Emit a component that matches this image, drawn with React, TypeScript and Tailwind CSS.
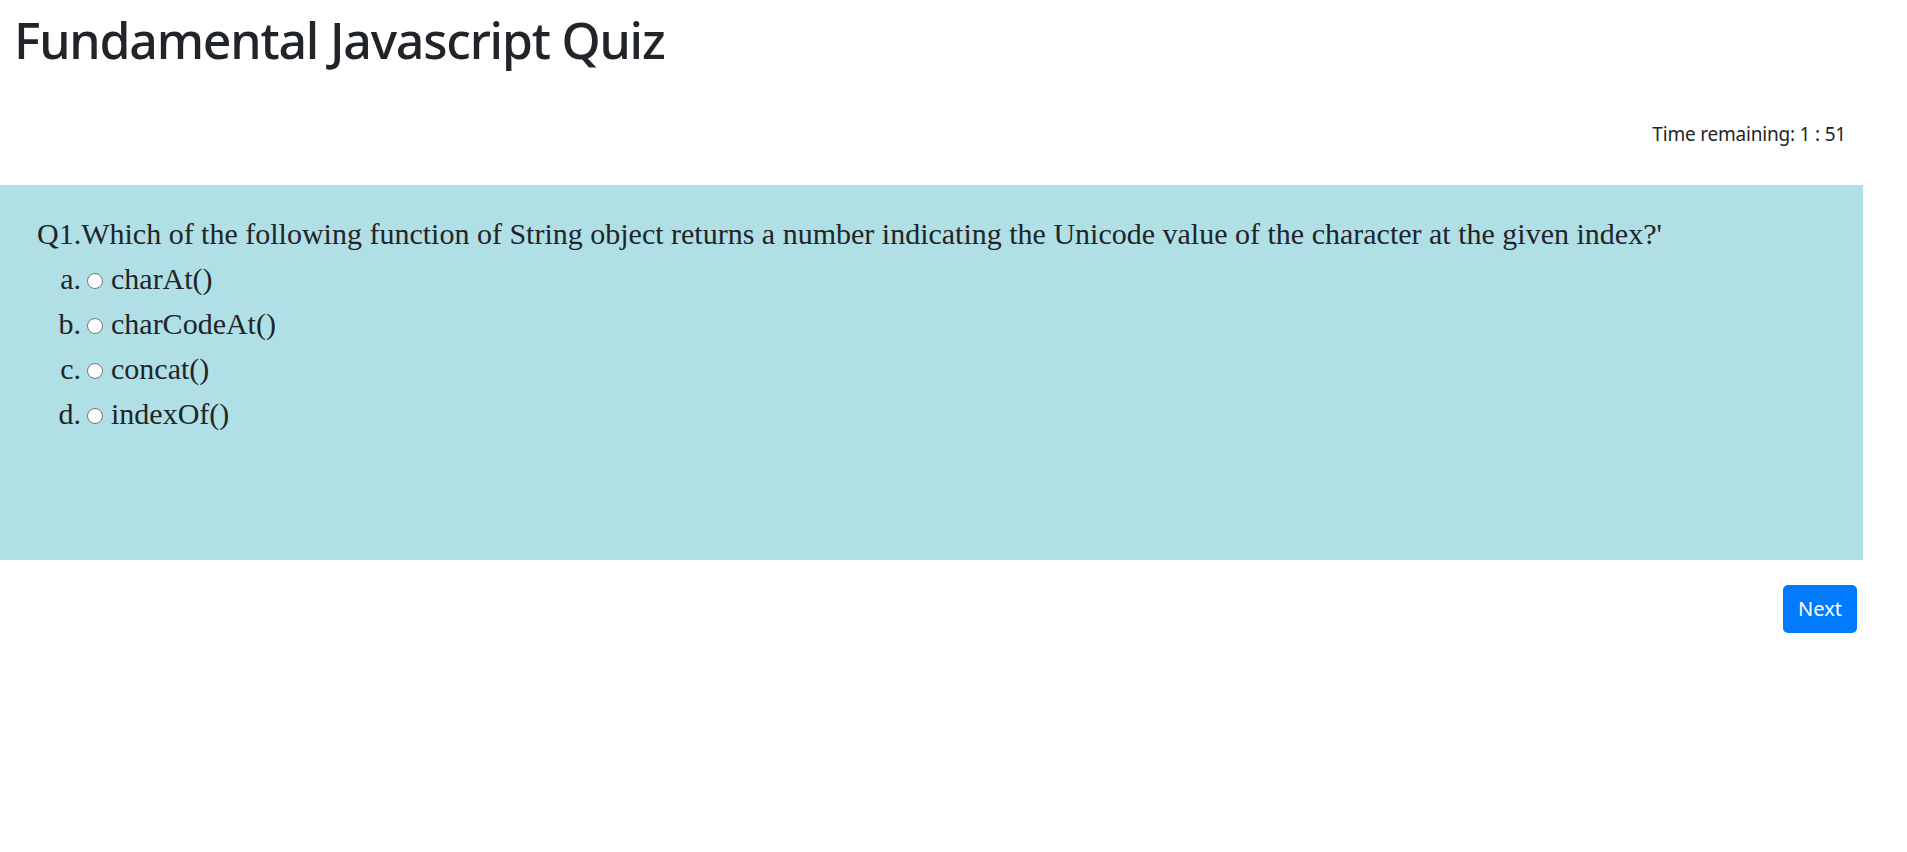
const options = [
  { key: 'a.', text: 'charAt()' },
  { key: 'b.', text: 'charCodeAt()' },
  { key: 'c.', text: 'concat()' },
  { key: 'd.', text: 'indexOf()' },
];

export default function App() {
  return (
    <div className="min-h-[852px] bg-white text-[#212529] font-['Noto_Sans',sans-serif]">
      <h1 className="pl-[14px] pt-[10px] text-[50px] leading-[60px] font-medium tracking-[-1.2px]">Fundamental Javascript Quiz</h1>
      <div className="mt-[49px] pr-[61px] text-right text-[19px] leading-[30px] tracking-[-0.2px]">Time remaining: 1 : 51</div>

      <div className="mt-[36px] w-[1863px] h-[375px] bg-[#b0e0e6] pl-[37px] pt-[26px] font-['Liberation_Serif',serif] text-[30px] leading-[45px]">
        <p>Q1.Which of the following function of String object returns a number indicating the Unicode value of the character at the given index?'</p>
        <ol>
          {options.map((o) => (
            <li key={o.key} className="flex items-center">
              <span className="w-[44px] text-right">{o.key}</span>
              <input
                type="radio"
                name="q1"
                className="appearance-none ml-[6px] mr-[8px] mt-[5px] w-[16px] h-[16px] rounded-full border border-[#767676] bg-white"
              />
              <label>{o.text}</label>
            </li>
          ))}
        </ol>
      </div>

      <div className="flex justify-end pr-[50px] mt-[25px]">
        <button className="w-[74px] h-[48px] rounded-[5px] bg-[#007bff] text-white text-[20px]">Next</button>
      </div>
    </div>
  );
}
